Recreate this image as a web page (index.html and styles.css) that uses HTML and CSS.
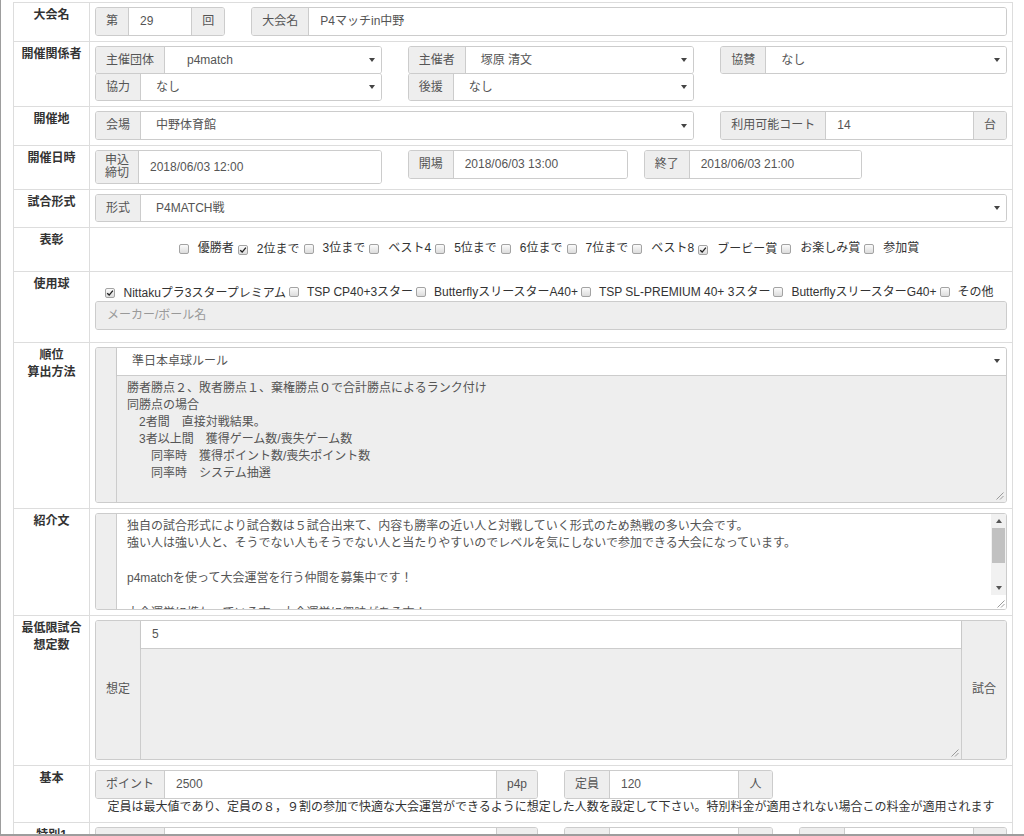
FILE: index.html
```html
<!DOCTYPE html>
<html lang="ja">
<head>
<meta charset="utf-8">
<title>大会編集</title>
<link rel="stylesheet" href="styles.css">
</head>
<body>
<div class="frame">
<div class="form">

  <div class="tr">
    <div class="th">大会名</div>
    <div class="td">
      <div class="row">
        <div class="col c2"><div class="ig"><span class="ad">第</span><span class="in">29</span><span class="ad end">回</span></div></div>
        <div class="col c10"><div class="ig"><span class="ad">大会名</span><span class="in">P4マッチin中野</span></div></div>
      </div>
    </div>
  </div>

  <div class="tr">
    <div class="th">開催関係者</div>
    <div class="td">
      <div class="row stack">
        <div class="col c4"><div class="ig"><span class="ad">主催団体</span><span class="in sel wide">p4match</span></div></div>
        <div class="col c4"><div class="ig"><span class="ad">主催者</span><span class="in sel">塚原 清文</span></div></div>
        <div class="col c4"><div class="ig"><span class="ad">協賛</span><span class="in sel">なし</span></div></div>
        <div class="col c4"><div class="ig"><span class="ad">協力</span><span class="in sel">なし</span></div></div>
        <div class="col c4"><div class="ig"><span class="ad">後援</span><span class="in sel">なし</span></div></div>
      </div>
    </div>
  </div>

  <div class="tr">
    <div class="th">開催地</div>
    <div class="td">
      <div class="row">
        <div class="col c8"><div class="ig"><span class="ad">会場</span><span class="in sel">中野体育館</span></div></div>
        <div class="col c4"><div class="ig"><span class="ad">利用可能コート</span><span class="in">14</span><span class="ad end">台</span></div></div>
      </div>
    </div>
  </div>

  <div class="tr">
    <div class="th">開催日時</div>
    <div class="td">
      <div class="row">
        <div class="col c4"><div class="ig tall"><span class="ad two">申込<br>締切</span><span class="in">2018/06/03 12:00</span></div></div>
        <div class="col c8">
          <div class="dts">
            <div class="ig dt1"><span class="ad">開場</span><span class="in">2018/06/03 13:00</span></div>
            <div class="ig dt2"><span class="ad">終了</span><span class="in">2018/06/03 21:00</span></div>
          </div>
        </div>
      </div>
    </div>
  </div>

  <div class="tr">
    <div class="th">試合形式</div>
    <div class="td">
      <div class="ig short"><span class="ad">形式</span><span class="in sel">P4MATCH戦</span></div>
    </div>
  </div>

  <div class="tr">
    <div class="th">表彰</div>
    <div class="td">
      <div class="checks award">
        <label class="ck"><span class="box"></span>優勝者</label><label class="ck"><span class="box on"><svg viewBox="0 0 10 10" width="8" height="8"><path d="M1.5 5.2L4 7.6L8.6 2" fill="none" stroke="#222" stroke-width="1.7"/></svg></span>2位まで</label><label class="ck"><span class="box"></span>3位まで</label><label class="ck"><span class="box"></span>ベスト4</label><label class="ck"><span class="box"></span>5位まで</label><label class="ck"><span class="box"></span>6位まで</label><label class="ck"><span class="box"></span>7位まで</label><label class="ck"><span class="box"></span>ベスト8</label><label class="ck"><span class="box on"><svg viewBox="0 0 10 10" width="8" height="8"><path d="M1.5 5.2L4 7.6L8.6 2" fill="none" stroke="#222" stroke-width="1.7"/></svg></span>ブービー賞</label><label class="ck"><span class="box"></span>お楽しみ賞</label><label class="ck"><span class="box"></span>参加賞</label>
      </div>
    </div>
  </div>

  <div class="tr">
    <div class="th">使用球</div>
    <div class="td">
      <div class="checks ball">
        <label class="ck"><span class="box on"><svg viewBox="0 0 10 10" width="8" height="8"><path d="M1.5 5.2L4 7.6L8.6 2" fill="none" stroke="#222" stroke-width="1.7"/></svg></span>Nittakuプラ3スタープレミアム</label><label class="ck"><span class="box"></span>TSP CP40+3スター</label><label class="ck"><span class="box"></span>ButterflyスリースターA40+</label><label class="ck"><span class="box"></span>TSP SL-PREMIUM 40+ 3スター</label><label class="ck"><span class="box"></span>ButterflyスリースターG40+</label><label class="ck"><span class="box"></span>その他</label>
      </div>
      <div class="ig dis"><span class="in ph">メーカー/ボール名</span></div>
    </div>
  </div>

  <div class="tr">
    <div class="th">順位<br>算出方法</div>
    <div class="td">
      <div class="ig rank">
        <span class="ad slim"></span>
        <div class="vcol">
          <span class="in sel top">準日本卓球ルール</span>
          <div class="ta grey">勝者勝点２、敗者勝点１、棄権勝点０で合計勝点によるランク付け
同勝点の場合
　2者間　直接対戦結果。
　3者以上間　獲得ゲーム数/喪失ゲーム数
　　同率時　獲得ポイント数/喪失ポイント数
　　同率時　システム抽選<svg class="grip" width="9" height="9" viewBox="0 0 9 9"><path d="M8.5 1.5L1.5 8.5M8.5 5L5 8.5" stroke="#9a9a9a" stroke-width="1"/></svg></div>
        </div>
      </div>
    </div>
  </div>

  <div class="tr">
    <div class="th">紹介文</div>
    <div class="td">
      <div class="ig intro">
        <span class="ad slim"></span>
        <div class="ta white">
          <div class="tatext">独自の試合形式により試合数は５試合出来て、内容も勝率の近い人と対戦していく形式のため熱戦の多い大会です。
強い人は強い人と、そうでない人もそうでない人と当たりやすいのでレベルを気にしないで参加できる大会になっています。

p4matchを使って大会運営を行う仲間を募集中です！

大会運営に携わっている方、大会運営に興味がある方！</div>
          <div class="sbar">
            <span class="sbtn"><span class="tri up"></span></span>
            <span class="thumb"></span>
            <span class="track"></span>
            <span class="sbtn"><span class="tri down"></span></span>
            <span class="corner"><svg width="9" height="9" viewBox="0 0 9 9"><path d="M8.5 1.5L1.5 8.5M8.5 5L5 8.5" stroke="#9a9a9a" stroke-width="1"/></svg></span>
          </div>
        </div>
      </div>
    </div>
  </div>

  <div class="tr">
    <div class="th">最低限試合<br>想定数</div>
    <div class="td">
      <div class="ig mincnt">
        <span class="ad">想定</span>
        <div class="vcol">
          <span class="in top">5</span>
          <div class="ta grey"><svg class="grip" width="9" height="9" viewBox="0 0 9 9"><path d="M8.5 1.5L1.5 8.5M8.5 5L5 8.5" stroke="#9a9a9a" stroke-width="1"/></svg></div>
        </div>
        <span class="ad end">試合</span>
      </div>
    </div>
  </div>

  <div class="tr">
    <div class="th">基本</div>
    <div class="td">
      <div class="row">
        <div class="col c6"><div class="ig"><span class="ad">ポイント</span><span class="in">2500</span><span class="ad end">p4p</span></div></div>
        <div class="col c3"><div class="ig"><span class="ad">定員</span><span class="in">120</span><span class="ad end">人</span></div></div>
      </div>
      <p class="help">定員は最大値であり、定員の８，９割の参加で快適な大会運営ができるように想定した人数を設定して下さい。特別料金が適用されない場合この料金が適用されます</p>
    </div>
  </div>

  <div class="tr">
    <div class="th">特別1</div>
    <div class="td">
      <div class="row">
        <div class="col c6"><div class="ig"><span class="ad">ポイント</span><span class="in"></span><span class="ad end">p4p</span></div></div>
        <div class="col c3"><div class="ig"><span class="ad">定員</span><span class="in"></span><span class="ad end">人</span></div></div>
        <div class="col c3"><div class="ig"><span class="ad">期限</span><span class="in"></span><span class="ad end">日</span></div></div>
      </div>
    </div>
  </div>

</div>
</div>
</body>
</html>
```

FILE: styles.css
```css
* { box-sizing: border-box; }

html, body {
  margin: 0;
  padding: 0;
  background: #fff;
}

body {
  font-family: "Liberation Sans", "Noto Sans CJK JP", sans-serif;
  font-size: 12px;
  color: #333;
}

.frame {
  width: 1024px;
  height: 836px;
  border-left: 1px solid #9d9d9d;
  border-bottom: 2px solid #9d9d9d;
  overflow: hidden;
  padding: 2px 0 0 12px;
}

.form {
  width: 1000px;
  border: 1px solid #ddd;
  border-bottom: 0;
}

.tr {
  display: flex;
  border-bottom: 1px solid #ddd;
}

.th {
  width: 76px;
  flex: none;
  border-right: 1px solid #ddd;
  padding: 4px 2px 5px;
  text-align: center;
  font-weight: bold;
  line-height: 17px;
  color: #333;
}

.td {
  flex: 1;
  min-width: 0;
  padding: 4px 5px 5px;
}

/* grid */
.row {
  display: flex;
  flex-wrap: wrap;
  margin: 0 -13px;
}
.col { padding: 0 13px; }
.c2 { width: 16.6667%; }
.c3 { width: 25%; }
.c4 { width: 33.3333%; }
.c6 { width: 50%; }
.c8 { width: 66.6667%; }
.c10 { width: 83.3333%; }

/* input groups */
.ig {
  display: flex;
  height: 29px;
  border: 1px solid #ccc;
  border-radius: 3px;
  overflow: hidden;
  background: #fff;
  color: #555;
  line-height: 17px;
}
.ig.short { height: 28px; }

.ad {
  flex: none;
  background: #eee;
  padding: 0 10px;
  display: flex;
  align-items: center;
  justify-content: center;
  white-space: nowrap;
  color: #555;
}
.ad:first-child { border-right: 1px solid #ccc; }
.ad.end { border-left: 1px solid #ccc; border-right: 0; }
.ad.two { line-height: 13px; text-align: center; padding: 0 9px; }
.ad.slim { width: 21px; padding: 0; }

.in {
  flex: 1;
  min-width: 0;
  display: flex;
  align-items: center;
  padding: 0 11px;
  white-space: nowrap;
  overflow: hidden;
  position: relative;
  background: #fff;
}

.sel { padding-left: 15px; }
.sel.wide { padding-left: 22px; }
.sel::after {
  content: "";
  position: absolute;
  right: 6px;
  top: 50%;
  margin-top: -2px;
  border-left: 3px solid transparent;
  border-right: 3px solid transparent;
  border-top: 4px solid #444;
}

.stack .ig { height: 28px; }
.stack .col:nth-child(n+4) { margin-top: -1px; }

.tall { height: 34px; }

.dts {
  display: flex;
  gap: 16px;
  align-items: flex-start;
}
.dt1 { width: 220px; }
.dt2 { width: 218px; }

/* checkboxes */
.checks {
  text-align: center;
  line-height: 17px;
  color: #333;
  white-space: nowrap;
}
.award { padding: 8px 0 7px; }
.award .ck { margin-right: 4px; }
.award .box { margin-right: 9px; }
.ball { padding-top: 8px; height: 25px; }

.ck {
  display: inline-flex;
  align-items: center;
  margin-right: 3px;
}

.box {
  width: 10px;
  height: 10px;
  border: 1px solid #a3a3a3;
  border-radius: 2px;
  background: linear-gradient(#fbfbfb, #dcdcdc);
  margin-right: 8px;
  display: inline-flex;
  align-items: center;
  justify-content: center;
}
.box svg { display: block; }

.dis { background: #eee; margin-bottom: 7px; }
.dis .in { background: #eee; }
.ph { color: #999; }

/* stacked columns inside groups */
.vcol {
  flex: 1;
  min-width: 0;
  display: flex;
  flex-direction: column;
}
.in.top {
  flex: none;
  height: 28px;
  border-bottom: 1px solid #ccc;
  box-shadow: 0 1px 2px rgba(0, 0, 0, 0.06);
}

.ta {
  flex: 1;
  position: relative;
  min-height: 0;
}
.ta.grey {
  background: #eee;
  color: #555;
  white-space: pre-wrap;
  padding: 4px 10px;
  line-height: 17px;
  overflow: hidden;
}
.grip {
  position: absolute;
  right: 2px;
  bottom: 2px;
}

.rank { height: 156px; }
.intro { height: 97px; }
.mincnt { height: 140px; }
.mincnt .ad { width: 45px; padding: 0; }
.mincnt .in.top { padding-left: 11px; }

.ta.white {
  display: flex;
  background: #fff;
  color: #555;
}
.tatext {
  flex: 1;
  min-width: 0;
  white-space: pre-wrap;
  padding: 4px 10px 0;
  line-height: 17.5px;
  overflow: hidden;
}

.sbar {
  width: 15px;
  flex: none;
  display: flex;
  flex-direction: column;
  background: #f1f1f1;
}
.sbtn {
  height: 14px;
  flex: none;
  display: flex;
  align-items: center;
  justify-content: center;
}
.tri {
  width: 0;
  height: 0;
  border-left: 3px solid transparent;
  border-right: 3px solid transparent;
}
.tri.up { border-bottom: 4px solid #555; }
.tri.down { border-top: 4px solid #555; }
.thumb {
  height: 35px;
  flex: none;
  margin: 0 1px;
  background: #c1c1c1;
}
.track { flex: 1; }
.corner {
  height: 14px;
  flex: none;
  background: #fff;
  display: flex;
  align-items: flex-end;
  justify-content: flex-end;
  padding: 0 1px 1px 0;
}
.corner svg { display: block; }

.help {
  margin: 0;
  text-align: center;
  line-height: 16px;
  padding-bottom: 2px;
  color: #333;
  white-space: nowrap;
}
```
